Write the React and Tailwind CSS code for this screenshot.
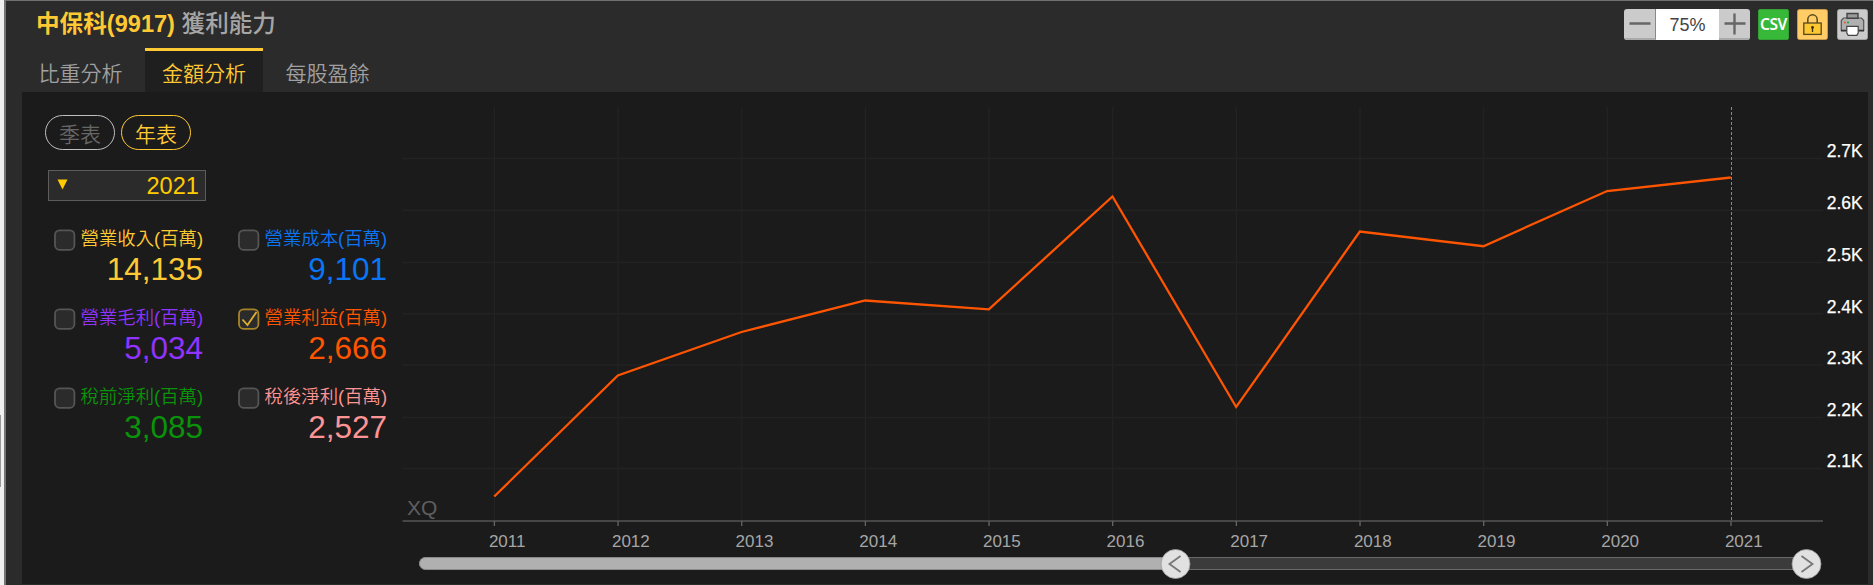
import React, { useState } from 'react';

const YEARS = [
  { year: '2011', y: 496.5 },
  { year: '2012', y: 375.5 },
  { year: '2013', y: 332 },
  { year: '2014', y: 300.5 },
  { year: '2015', y: 309.3 },
  { year: '2016', y: 196.5 },
  { year: '2017', y: 407 },
  { year: '2018', y: 231.5 },
  { year: '2019', y: 246.2 },
  { year: '2020', y: 191 },
  { year: '2021', y: 177.5 },
];

const LEVELS = [
  { label: '2.7K', y: 158.5 },
  { label: '2.6K', y: 210.2 },
  { label: '2.5K', y: 262.5 },
  { label: '2.4K', y: 313.7 },
  { label: '2.3K', y: 365 },
  { label: '2.2K', y: 417.5 },
  { label: '2.1K', y: 468.5 },
];

const ITEMS = [
  { id: 'revenue', label: '營業收入', value: '14,135', color: 'text-[#ffc933]' },
  { id: 'cost', label: '營業成本', value: '9,101', color: 'text-[#0a75f5]' },
  { id: 'gross', label: '營業毛利', value: '5,034', color: 'text-[#9033ff]' },
  { id: 'operating', label: '營業利益', value: '2,666', color: 'text-[#ff5500]' },
  { id: 'pretax', label: '稅前淨利', value: '3,085', color: 'text-[#0a930a]' },
  { id: 'net', label: '稅後淨利', value: '2,527', color: 'text-[#ff9494]' },
];

const TABS = ['比重分析', '金額分析', '每股盈餘'];

const xOf = (i) => 494.2 + i * 123.66;

function LockIcon() {
  return (
    <svg width="31" height="31" viewBox="0 0 31 31" className="block">
      <rect x="0.5" y="0.5" width="30" height="30" rx="2" fill="#ffcc66" stroke="#c59a4b" />
      <path d="M10.8 14V10.5a4.7 4.7 0 0 1 9.4 0V14" fill="none" stroke="#55481f" strokeWidth="1.5" />
      <rect x="6.8" y="14" width="17.4" height="11.4" fill="#fcc72f" stroke="#55481f" strokeWidth="1.3" />
      <circle cx="15.5" cy="18.5" r="1.4" fill="#3a3010" />
      <path d="M15.5 19v4" stroke="#3a3010" strokeWidth="1.3" />
    </svg>
  );
}

function PrinterIcon() {
  return (
    <svg width="31" height="31" viewBox="0 0 31 31" className="block">
      <rect x="0.5" y="0.5" width="30" height="30" rx="2" fill="#cbcbcb" stroke="#a3a3a3" />
      <path d="M4.3 21.5V11.5L6.5 9h18l2.2 2.5v10z" fill="#b0b0b0" stroke="#555" strokeWidth="1.2" />
      <path d="M10 9.3V4.5h11v4.8z" fill="#999" stroke="#444" strokeWidth="1.4" />
      <path d="M4 21.7h5.5M21.5 21.7H27" stroke="#333" strokeWidth="1.8" />
      <circle cx="7.8" cy="13.5" r="1.1" fill="#f05a28" />
      <circle cx="11" cy="13.5" r="1.1" fill="#20a050" />
      <path d="M9.8 17.3h11.4v6.7l-1.4 2.3h-8.6l-1.4-2.3z" fill="#fff" stroke="#444" strokeWidth="1.2" />
    </svg>
  );
}

function Toolbar() {
  return (
    <div className="flex items-start">
      <div className="mr-2 flex h-[31px] overflow-hidden rounded-[3px] font-['Liberation_Sans',sans-serif]">
        <button type="button" className="flex w-8 items-center justify-center border-b-2 border-[#aaa] border-r border-r-[#888] bg-[#cbcbcb]">
          <svg width="22" height="22" viewBox="0 0 22 22"><path d="M0.5 10.5h21" stroke="#666" strokeWidth="2.4" /></svg>
        </button>
        <span className="w-[63px] bg-white text-center text-[18px] leading-[32px] text-[#444]">75%</span>
        <button type="button" className="flex w-[31px] items-center justify-center border-b-2 border-[#aaa] bg-[#cbcbcb]">
          <svg width="22" height="22" viewBox="0 0 22 22"><path d="M0.5 10.5h21M10.5 0.5v21" stroke="#666" strokeWidth="2.4" /></svg>
        </button>
      </div>
      <button type="button" className="mr-2 flex h-[31px] w-[31px] justify-center rounded-[2px] border border-[#32a032] bg-[#38b838] font-['Noto_Sans',sans-serif] text-[15.5px] leading-[28px] font-semibold tracking-[-0.4px] text-white">
        <span>CSV</span>
      </button>
      <button type="button" className="mr-[9px]"><LockIcon /></button>
      <button type="button"><PrinterIcon /></button>
    </div>
  );
}

function CheckBox({ checked, onClick }) {
  return (
    <button type="button" onClick={onClick} className="mt-0.5 h-[22px] w-[22px] shrink-0">
      <svg width="22" height="22" viewBox="0 0 22 22" className="block">
        <rect x="1" y="1.4" width="19.4" height="19.4" rx="4.5" fill="#2b2b2b" stroke={checked ? '#a68428' : '#555'} strokeWidth="1.8" />
        {checked && <path d="M4.5 11.5l5 5.5L18.5 4" fill="none" stroke="#e0b030" strokeWidth="1.8" />}
      </svg>
    </button>
  );
}

function Chart() {
  const line = YEARS.map((p, i) => `${xOf(i)},${p.y}`).join(' ');
  return (
    <svg width="1466" height="492" viewBox="402 92 1466 492" className="block font-['Liberation_Sans',sans-serif]">
      {/* grid */}
      {LEVELS.map(l => (
        <path key={l.label} d={`M402.5 ${l.y}H1823`} stroke="#232323" strokeWidth="1.4" />
      ))}
      {YEARS.slice(0, -1).map((p, i) => (
        <path key={p.year} d={`M${xOf(i) + 0.2} 107V521`} stroke="#232323" strokeWidth="1.3" />
      ))}
      <text x="407" y="515" fontSize="21" fill="#5e5e5e">XQ</text>

      {/* x axis */}
      <path d="M402.5 521H1823" stroke="#464646" strokeWidth="2" />
      {YEARS.map((p, i) => (
        <g key={p.year}>
          <path d={`M${xOf(i) + 0.2} 521V526`} stroke="#666" strokeWidth="1.3" />
          <text x={xOf(i) + 13} y="547" fontSize="17" fill="#a6a6a6" textAnchor="middle">{p.year}</text>
        </g>
      ))}
      {LEVELS.map(l => (
        <text key={l.label} x="1826.7" y={l.y - 1.2} fontSize="17.5" fill="#fff" stroke="#fff" strokeWidth="0.25">{l.label}</text>
      ))}

      <polyline points={line} fill="none" stroke="#ff5500" strokeWidth="2.3" />
      <path d="M1731.5 107V521" stroke="#a88a2e" strokeDasharray="3 2" />

      {/* range slider */}
      <rect x="419.5" y="557.5" width="1390" height="12" rx="6" fill="#3b3b3b" stroke="#686868" />
      <path d="M1175 557.5H425.5a6 6 0 0 0 0 12H1175z" fill="#b0b0b0" stroke="#8b8b8b" />
      <circle cx="1175.5" cy="564" r="14.5" fill="#e1e1e1" stroke="#999" strokeWidth="0.8" />
      <path d="M1180.5 556l-11 8 11 8" fill="none" stroke="#777" strokeWidth="1.8" />
      <circle cx="1806.5" cy="564" r="14.5" fill="#e1e1e1" stroke="#999" strokeWidth="0.8" />
      <path d="M1801.5 556l11 8-11 8" fill="none" stroke="#777" strokeWidth="1.8" />
    </svg>
  );
}

export default function App() {
  const [tab, setTab] = useState('金額分析');
  const [period, setPeriod] = useState('年表');
  const [picked, setPicked] = useState('operating');

  return (
    <div className="flex h-[585px] w-[1873px] overflow-hidden bg-[#2b2b2b] font-['Liberation_Sans','Noto_Sans_CJK_TC',sans-serif]">
      {/* Window edge */}
      <div className="flex w-1 shrink-0 items-start bg-[#f0f0f0]">
        <div className="mt-[415px] h-[72px] w-px bg-[#999]" />
      </div>
      <div className="w-0.5 shrink-0 bg-[#747474]" />

      <main className="flex min-w-0 flex-1 flex-col border-t border-[#707070] pr-[5px] pl-4">
        <header className="flex h-[47px] justify-between">
          <h1 className="mt-1.5 ml-3.5 text-[23.6px] leading-[34px] whitespace-nowrap">
            <span className="font-bold text-[#ffc933]">中保科(9917)</span>{' '}
            <span className="font-medium text-[#a6a6a6]">獲利能力</span>
          </h1>
          <div className="pt-2"><Toolbar /></div>
        </header>

        <nav className="flex h-11 text-[21px] font-[350]">
          {TABS.map(t => (
            <button
              key={t}
              type="button"
              onClick={() => setTab(t)}
              className={`h-11 border-t-[3px] leading-[45px] ${
                tab === t ? 'w-[118px] border-[#ffc933] bg-[#1f1f1f] text-[#ffc933]' : 'w-[123px] border-transparent text-[#a0a0a0]'
              } ${t === '每股盈餘' ? 'ml-[3px]' : ''} ${t === '比重分析' ? 'pr-1.5' : ''}`}
            >
              {t}
            </button>
          ))}
        </nav>

        <section className="flex h-[492px] bg-[#1b1b1b]">
          <aside className="w-[380px] shrink-0">
            <div className="mt-[23px] ml-[23px] flex gap-1.5">
              {['季表', '年表'].map(p => (
                <button
                  key={p}
                  type="button"
                  onClick={() => setPeriod(p)}
                  className={`h-[35px] w-[70px] rounded-full border text-[21px] leading-[37px] font-[350] ${
                    period === p ? 'border-[#ffc933] text-[#ffc933]' : 'border-[#c0c0c0] text-[#666]'
                  }`}
                >
                  {p}
                </button>
              ))}
            </div>

            <div className="mt-5 ml-[26px] flex h-[31px] w-[158px] items-center justify-between border border-[#5c5c5c] bg-[#2b2b2b] pr-1.5 pl-2 text-[#ffcc00]">
              <svg width="11" height="11" viewBox="0 0 11 11" className="-mt-0.5"><path d="M0.5 0.5h10l-5 10z" fill="#ffcc00" /></svg>
              <span className="pt-px text-[23.6px] leading-[31px]">2021</span>
            </div>

            <div className="mt-[26px] ml-8 grid w-[334px] grid-cols-[149px_149px] gap-x-[35px]">
              {ITEMS.map(item => (
                <div key={item.id} className="flex h-[79px]">
                  <CheckBox checked={picked === item.id} onClick={() => setPicked(item.id)} />
                  <div className={`ml-[4.5px] w-[122.5px] shrink-0 text-right whitespace-nowrap ${item.color}`}>
                    <div className="text-[18.4px] leading-[23px] font-[350]">{item.label}(百萬)</div>
                    <div className="text-[31.5px] leading-[39px]">{item.value}</div>
                  </div>
                </div>
              ))}
            </div>
          </aside>
          <Chart />
        </section>
      </main>
    </div>
  );
}
